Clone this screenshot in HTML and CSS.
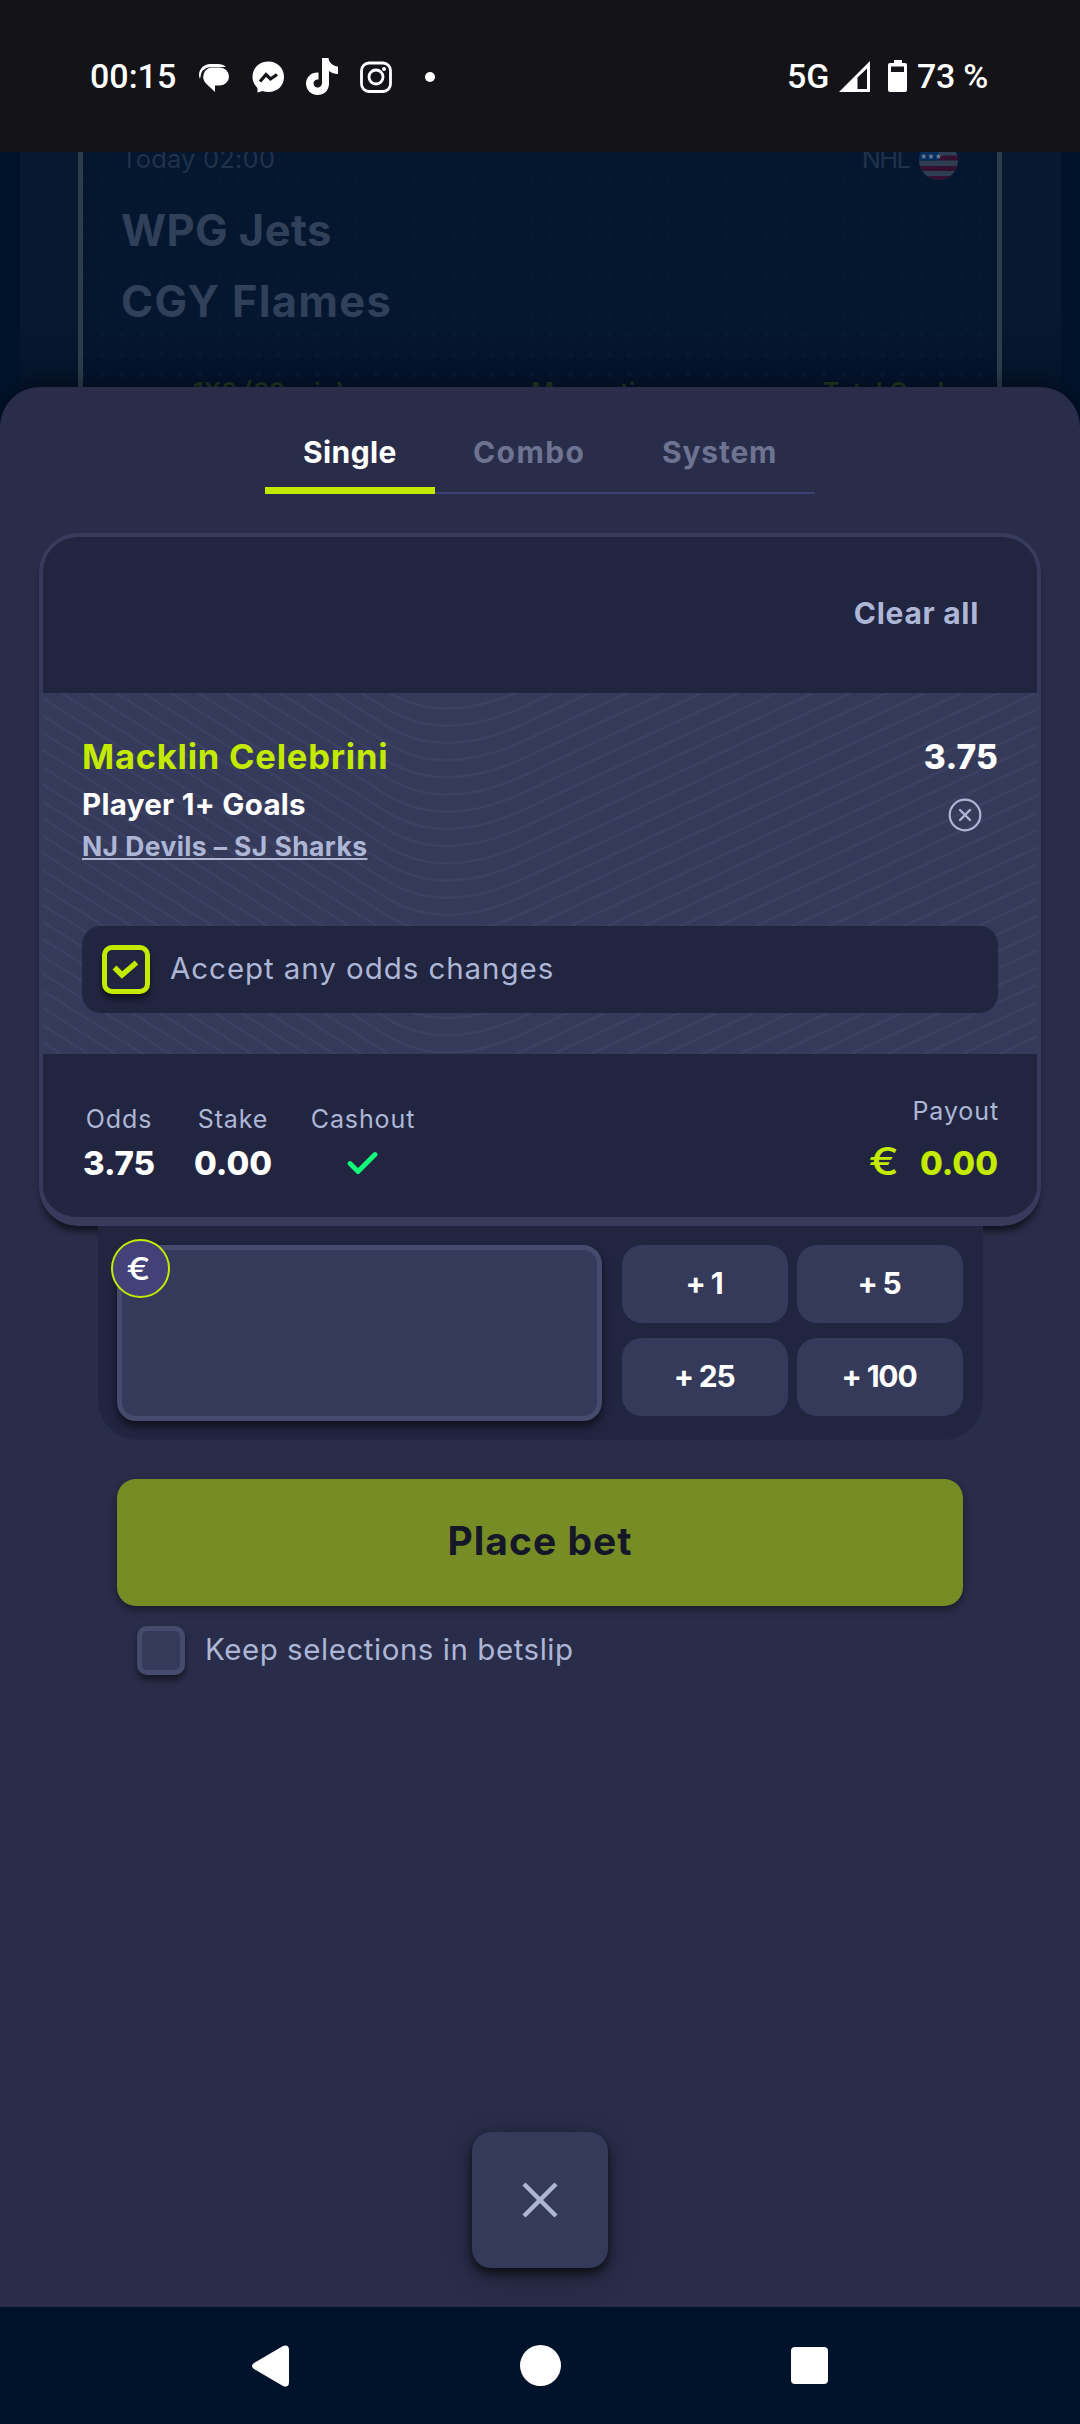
FILE: index.html
```html
<!DOCTYPE html>
<html lang="en">
<head>
  <meta charset="UTF-8">
  <meta name="viewport" content="width=device-width, initial-scale=1.0">
  <title>Betslip</title>
  <link rel="stylesheet" href="styles.css">
</head>
<body>
  <header class="status-bar">
    <div class="status-left">
      <span class="clock">00:15</span>
      <svg class="notifications" width="240" height="40" viewBox="199 57 240 40">
        <!-- chat -->
        <path d="M200 79a10 10 0 0 1-1-4c0-6 5-11 11-11h8q5 0 8 3h-16q-9 1-10 12z" fill="#fff"/>
        <path d="M211 67.500h9a9 9 0 0 1 0 18h-5v6.500l-9-8.500a9.500 9.500 0 0 1 5-16z" fill="#fff"/>
        <!-- messenger -->
        <path d="M268.500 61.500c-9 0-16 6.500-16 15.500 0 4.500 2 8 5 11v4.500l5-1.500a17 17 0 0 0 6 1c9 0 15.500-6.500 15.500-15s-6.500-15.500-15.500-15.500z" fill="#fff"/>
        <path d="M260 81.500l6-7 4.500 4.500 6.500-4.500" fill="none" stroke="#141317" stroke-width="3.200"/>
        <!-- tiktok -->
        <path d="M322 58h6.500c.5 4.500 4 8 9.500 8.500v7.500c-3.500 0-6.500-1-9-3v12.500c0 7-5 11.500-11.500 11.500S306 90 306 83.500 311.500 72 318.500 72.500v7c-3-.5-5 1.500-5 4s2 4 4 4c2.500 0 4.500-1.500 4.500-5z" fill="#fff"/>
        <!-- instagram -->
        <rect x="361.500" y="63" width="29" height="28.500" rx="7.500" fill="none" stroke="#fff" stroke-width="2.800"/>
        <circle cx="376" cy="77" r="7" fill="none" stroke="#fff" stroke-width="2.800"/>
        <circle cx="384" cy="69" r="2" fill="#fff"/>
        <circle cx="430" cy="77" r="5" fill="#fff"/>
      </svg>
    </div>
    <div class="status-right">
      <span class="network">5G</span>
      <svg width="31" height="31" viewBox="0 0 31 31">
        <path d="M0 31L31 0v31zM18.500 16.500V28H28V7.500z" fill="#fff" fill-rule="evenodd"/>
      </svg>
      <svg class="battery" width="19" height="32" viewBox="0 0 19 32">
        <path d="M6 0h8v3h3a2 2 0 0 1 2 2v25a2 2 0 0 1-2 2H2a2 2 0 0 1-2-2V5a2 2 0 0 1 2-2h4zM3 6.500V12h13V6.500z" fill="#fff" fill-rule="evenodd"/>
      </svg>
      <span class="percent">73 %</span>
    </div>
  </header>

  <section class="backdrop">
    <div class="match-card">
      <div class="match-head">
        <span class="match-time">Today 02:00</span>
        <span class="league">NHL</span>
        <svg class="flag" width="39" height="39" viewBox="0 0 39 39">
          <defs><clipPath id="round"><circle cx="19.500" cy="19.500" r="19.500"/></clipPath></defs>
          <g clip-path="url(#round)">
            <rect width="39" height="39" fill="#2d3d52"/>
            <path d="M0 17h39M0 27.500h39M0 37.500h39M0 7h39" stroke="#33102f" stroke-width="5"/>
            <rect width="20" height="19.500" fill="#062c5c"/>
            <text x="1" y="18" class="stars">★★★</text>
          </g>
        </svg>
      </div>
      <div class="team">WPG Jets</div>
      <div class="team flames">CGY Flames</div>
      <div class="markets">
        <span>1X2 (60 min)</span>
        <span>Money tie</span>
        <span>Total Goals</span>
      </div>
    </div>
  </section>

  <main class="sheet">
    <nav class="tabs">
      <div class="tab single active">Single</div>
      <div class="tab combo">Combo</div>
      <div class="tab system">System</div>
    </nav>

    <section class="slip">
      <div class="slip-head">Clear all</div>

      <div class="selection">
        <svg class="waves" id="waves" width="994" height="361" viewBox="43 693 994 361"></svg>
        <div class="selection-row">
          <div>
            <div class="player">Macklin Celebrini</div>
            <div class="market">Player 1+ Goals</div>
            <div class="event">NJ Devils – SJ Sharks</div>
          </div>
          <div class="selection-side">
            <div class="odds">3.75</div>
            <svg class="remove" width="34" height="34" viewBox="0 0 34 34" fill="none" stroke="#aeb6d6">
              <circle cx="17" cy="17" r="15.300" stroke-width="2.200"/>
              <path d="M12 12l10 10M22 12L12 22" stroke-width="2.400" stroke-linecap="round"/>
            </svg>
          </div>
        </div>
        <div class="accept">
          <div class="checkbox checked">
            <svg width="28" height="22" viewBox="0 0 28 22" fill="none" stroke="#c3ea00" stroke-width="5.500">
              <path d="M2.500 8.500l7.500 7.500L24.500 3.500"/>
            </svg>
          </div>
          <span>Accept any odds changes</span>
        </div>
      </div>

      <div class="totals">
        <div class="total">
          <div class="label">Odds</div>
          <div class="value">3.75</div>
        </div>
        <div class="total stake">
          <div class="label">Stake</div>
          <div class="value">0.00</div>
        </div>
        <div class="total cashout">
          <div class="label">Cashout</div>
          <div class="value">
            <svg width="32" height="24" viewBox="0 0 32 24" fill="none" stroke="#12ff7a" stroke-width="4.800" stroke-linecap="round" stroke-linejoin="round">
              <path d="M3 12.500l8 8L28 3.500"/>
            </svg>
          </div>
        </div>
        <div class="payout">
          <div class="label">Payout</div>
          <div class="value"><span class="euro">€</span>0.00</div>
        </div>
      </div>
    </section>

    <section class="stake-panel">
      <div class="stake-input">
        <span class="currency"><span>€</span></span>
      </div>
      <div class="quick">
        <button>+ 1</button>
        <button>+ 5</button>
        <button>+ 25</button>
        <button>+ 100</button>
      </div>
    </section>

    <button class="place-bet">Place bet</button>

    <div class="keep">
      <div class="checkbox"></div>
      <span>Keep selections in betslip</span>
    </div>

    <button class="close">
      <svg width="36" height="36" viewBox="0 0 36 36" fill="none" stroke="#aeb6d6" stroke-width="4.500">
        <path d="M2 2l32 32M34 2L2 34"/>
      </svg>
    </button>
  </main>

  <footer class="system-nav">
    <svg width="37" height="42" viewBox="0 0 37 42" fill="#fff">
      <path d="M2 18L31 1q6-2 6 4v32q0 6-6 4L2 24q-4-3 0-6z"/>
    </svg>
    <svg width="41" height="41" viewBox="0 0 41 41" fill="#fff">
      <circle cx="20.500" cy="20.500" r="20.500"/>
    </svg>
    <svg width="37" height="37" viewBox="0 0 37 37" fill="#fff">
      <rect width="37" height="37" rx="4"/>
    </svg>
  </footer>

  <script>
    // wave lines behind the selection, one every 17.2px
    let lines = '';
    for (let i = 0; i < 36; i++) {
      const y = 708.5 + i * 17.2;
      lines += `<path d="M40 ${y - 235.5}L385 ${y - 18}C425 ${y + 7.2} 470 ${y + 5} 520 ${y - 17.4}L1040 ${y - 258.2}"/>`;
    }
    document.getElementById('waves').innerHTML = lines;
  </script>
</body>
</html>
```
FILE: styles.css
```css
* {
  box-sizing: border-box;
}
body {
  display: flex;
  flex-direction: column;
  width: 1080px;
  height: 2424px;
  margin: 0;
  background-color: #00132b;
  font-family: Inter, "Open Sans", sans-serif;
  color: #fff;
  overflow: hidden;
}
svg {
  display: block;
  flex: none;
}
button {
  padding: 0;
  border: none;
  font-family: inherit;
  color: #fff;
}

/* status bar */
.status-bar {
  position: relative;
  z-index: 1;
  display: flex;
  flex: none;
  justify-content: space-between;
  height: 152px;
  padding: 50px 91px 0 90px;
  background-color: #141317;
  font-family: Roboto, sans-serif;
  font-size: 34px;
  font-weight: 500;
  line-height: 53px;
}
.status-left,
.status-right {
  display: flex;
}
.clock {
  width: 109px;
}
.notifications {
  margin-top: 7px;
}
.status-right svg {
  margin-top: 11px;
}
.network {
  width: 52px;
}
.status-right .battery {
  margin: 10px 10px 0 18px;
}
.percent {
  width: 72px;
  letter-spacing: -0.3px;
  white-space: nowrap;
}

/* dimmed page behind the sheet */
.backdrop {
  flex: none;
  height: 275px;
  padding: 0 58px;
  border: solid #00132b;
  border-width: 0 19px 0 20px;
  background: linear-gradient(#07182f 60%, #041228);
}
.match-card {
  height: 275px;
  margin-right: 1px;
  border: solid #2c3c4a;
  border-width: 0 5px;
  background: radial-gradient(circle, #071a34 1.5px, transparent 2.5px) 10px 17.500px / 19.500px 19.500px, linear-gradient(#05162f 60%, #03112a);
}
.match-head {
  display: flex;
  height: 28px;
  padding: 0 39px 0 38px;
  font-size: 25.500px;
  line-height: 30px;
  color: #20314b;
}
.match-head span {
  margin-top: -8px;
}
.match-time {
  flex: 1;
  letter-spacing: 0.2px;
}
.league {
  letter-spacing: -1.800px;
}
.flag {
  margin: -11px 0 0 10px;
}
.stars {
  font-size: 7px;
  fill: #6a7f9e;
}
.team {
  padding: 15px 0 0 38px;
  font-size: 43.500px;
  font-weight: 700;
  line-height: 71px;
  letter-spacing: 0.4px;
  color: #304058;
}
.team.flames {
  padding-top: 0;
  letter-spacing: 1.300px;
}
.markets {
  display: grid;
  grid-template-columns: 338px 292px 1fr;
  padding: 35px 0 0 110px;
  font-size: 25px;
  font-weight: 600;
  line-height: 40px;
  color: #243722;
}

/* betslip sheet */
.sheet {
  position: relative;
  display: flex;
  flex: 1;
  flex-direction: column;
  margin-top: -40px;
  padding: 35px 39px 39px;
  border-radius: 40px 40px 0 0;
  background-color: #292d49;
  box-shadow: 0 0 24px rgba(0, 0, 0, 0.5);
}
.tabs {
  display: flex;
  width: 550px;
  height: 72px;
  margin-left: 226px;
  box-shadow: inset 0 -2px #3d4270;
  font-size: 30px;
  font-weight: 700;
  line-height: 61px;
  color: #6d7391;
}
.tab {
  width: 191px;
  padding-left: 38px;
}
.tab.single {
  width: 170px;
  letter-spacing: 0.4px;
}
.tab.combo {
  width: 189px;
  letter-spacing: 1.400px;
}
.tab.system {
  letter-spacing: 0.800px;
}
.tab.active {
  border-bottom: 7px solid #c3ea00;
  color: #fff;
}
.slip {
  margin-top: 39px;
  border: 4px solid #373a5b;
  border-bottom-width: 9px;
  border-radius: 39px;
  background-color: #212540;
  box-shadow: 0 7px 7px -2px rgba(0, 0, 0, 0.6);
}
.slip-head {
  height: 156px;
  padding-right: 58px;
  font-size: 30px;
  font-weight: 700;
  line-height: 153px;
  letter-spacing: 0.700px;
  text-align: right;
  color: #aeb6d6;
}
.selection {
  position: relative;
  height: 361px;
  padding: 40px 39px 0;
  background-color: #353a5a;
}
.waves {
  position: absolute;
  top: 0;
  left: 0;
  fill: none;
  stroke: #3c4162;
  stroke-width: 2.500px;
}
.selection-row {
  position: relative;
  display: flex;
  justify-content: space-between;
}
.player {
  font-size: 34.500px;
  font-weight: 700;
  line-height: 48px;
  letter-spacing: 0.780px;
  color: #c3ea00;
}
.market {
  font-size: 29.500px;
  font-weight: 700;
  line-height: 46px;
  letter-spacing: 0.300px;
}
.event {
  font-size: 26.500px;
  font-weight: 700;
  line-height: 38px;
  letter-spacing: 0.400px;
  color: #aeb6d6;
  text-decoration: underline;
  text-decoration-thickness: 2px;
  text-underline-offset: 2px;
  text-decoration-skip-ink: none;
}
.odds {
  font-size: 33.500px;
  font-weight: 800;
  line-height: 48px;
  letter-spacing: 0.200px;
}
.remove {
  margin: 17px 0 0 24px;
}
.accept {
  position: relative;
  display: flex;
  align-items: center;
  height: 87px;
  margin-top: 61px;
  padding-left: 20px;
  border-radius: 19px;
  background-color: #212540;
  font-size: 29.500px;
  letter-spacing: 0.940px;
  color: #aeb6d6;
}
.accept span {
  margin-top: -3px;
}
.checkbox {
  display: flex;
  align-items: center;
  justify-content: center;
  width: 48px;
  height: 49px;
  margin-right: 20px;
  border: 5px solid #464a6c;
  border-radius: 10px;
  background-color: #353a5a;
  box-shadow: 0 5px 6px rgba(0, 0, 0, 0.5);
}
.checkbox.checked {
  border-color: #c3ea00;
  background-color: #212540;
}
.totals {
  display: flex;
  height: 163px;
  padding: 49px 39px 0 39px;
}
.total {
  width: 74px;
  margin-right: 38px;
  text-align: center;
}
.total.stake {
  width: 78px;
}
.total.cashout {
  width: 106px;
}
.label {
  margin-bottom: 5px;
  font-size: 25px;
  line-height: 32px;
  letter-spacing: 0.900px;
  color: #aeb6d6;
}
.value {
  font-size: 33px;
  font-weight: 800;
  line-height: 46px;
  white-space: nowrap;
}
.cashout svg {
  margin: 16px auto 0;
}
.payout {
  flex: 1;
  margin-top: -8px;
  text-align: right;
}
.payout .label {
  margin: 0 -1px 13px 0;
}
.payout .value {
  color: #c3ea00;
}
.euro {
  display: inline-block;
  margin-right: 23px;
  font-size: 38px;
  font-weight: 500;
  line-height: 40px;
  transform: scaleX(1.18);
}
.stake-panel {
  display: flex;
  gap: 20px;
  width: 885px;
  height: 214px;
  margin-left: 59px;
  padding: 19px;
  border-radius: 0 0 40px 40px;
  background-color: #212540;
}
.stake-input {
  position: relative;
  width: 485px;
  height: 176px;
  border: 5px solid #464a6c;
  border-radius: 19px;
  background-color: #353a5a;
  box-shadow: 0 5px 8px rgba(0, 0, 0, 0.6);
}
.currency {
  position: absolute;
  top: -11px;
  left: -11px;
  width: 59px;
  height: 59px;
  padding-right: 4px;
  border: 2px solid #c3ea00;
  border-radius: 50%;
  background-color: #434178;
  font-size: 31px;
  font-weight: 500;
  line-height: 55px;
  text-align: center;
}
.currency span {
  display: inline-block;
  transform: scaleX(1.15);
}
.quick {
  display: grid;
  grid-template-columns: 166px 166px;
  grid-template-rows: 78px 78px;
  gap: 15px 9px;
}
.quick button {
  padding: 0 2px 3px 0;
  border-radius: 20px;
  background-color: #353a5a;
  font-size: 30px;
  font-weight: 700;
  letter-spacing: -1.200px;
}
.place-bet {
  height: 127px;
  margin: 39px 78px 0;
  padding-bottom: 4px;
  border-radius: 19px;
  background-color: #778c25;
  box-shadow: 0 4px 8px rgba(0, 0, 0, 0.4);
  font-size: 39px;
  font-weight: 700;
  letter-spacing: 1px;
  color: #151729;
}
.keep {
  display: flex;
  align-items: center;
  margin: 20px 0 0 98px;
  font-size: 29.500px;
  letter-spacing: 0.540px;
  color: #aeb6d6;
}
.keep span {
  margin-top: -4px;
}
.close {
  display: flex;
  align-items: center;
  justify-content: center;
  width: 136px;
  height: 136px;
  margin: auto auto 0;
  border-radius: 19px;
  background-color: #353a5a;
  box-shadow: 0 5px 8px rgba(0, 0, 0, 0.6), 0 8px 28px rgba(0, 0, 0, 0.35);
}

/* android navigation */
.system-nav {
  position: relative;
  display: flex;
  flex: none;
  align-items: center;
  justify-content: space-between;
  height: 117px;
  padding: 0 252px;
  background-color: #00132b;
}
```
